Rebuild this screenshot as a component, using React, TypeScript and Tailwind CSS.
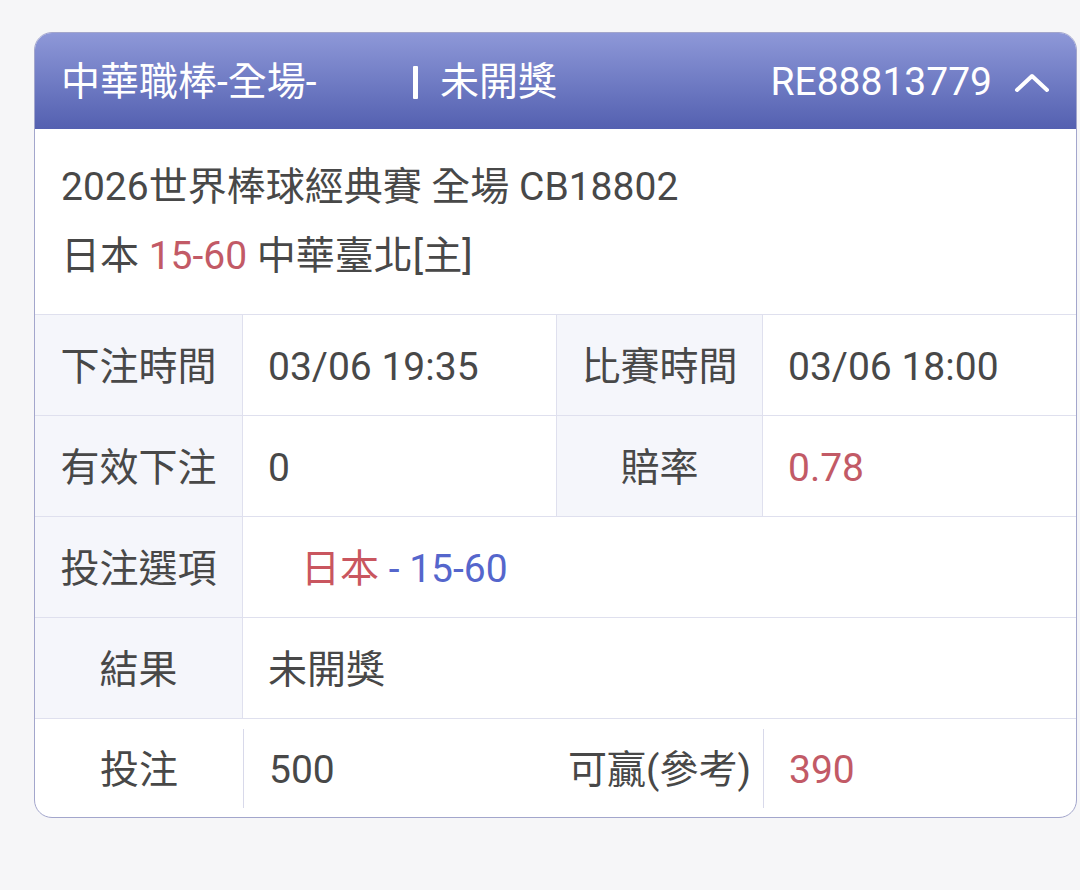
import React from "react";

const font = { fontFamily: 'Roboto, "Noto Sans CJK TC", sans-serif' };

function Label({ children }: { children: React.ReactNode }) {
  return (
    <div className="flex items-center justify-center pt-[5px] bg-[#f5f6fb] border-r border-[#dfe0ee] text-[39px] text-[#484848]">
      {children}
    </div>
  );
}

function Value({ children, className = "" }: { children: React.ReactNode; className?: string }) {
  return (
    <div className={`flex items-center pt-[5px] pl-[25px] text-[39px] text-[#484848] ${className}`}>
      {children}
    </div>
  );
}

export default function App() {
  return (
    <div className="min-h-[890px] w-[1080px] bg-[#f6f6f8] pt-[32px]" style={font}>
      <div className="ml-[34px] w-[1043px] rounded-[18px] border border-[#a3a6cc] bg-white overflow-hidden">
        {/* Header */}
        <div className="h-[96px] flex items-center pt-[3px] bg-gradient-to-b from-[#8e98d8] to-[#5460b0] text-white text-[39px] pl-[26px] pr-[26px]">
          <span className="w-[352px]">中華職棒-全場-</span>
          <span className="w-[5px] h-[33px] bg-white rounded-[1px]" />
          <span className="ml-[22px]">未開獎</span>
          <span className="ml-auto">RE88813779</span>
          <svg className="ml-[22px]" width="36" height="20" viewBox="0 0 36 20" fill="none">
            <path d="M3 17 L18 3 L33 17" stroke="white" strokeWidth="4" strokeLinecap="round" strokeLinejoin="round" />
          </svg>
        </div>
        {/* Info */}
        <div className="px-[26px] pt-[24px] pb-[23px] text-[39px] leading-[69px] text-[#484848]">
          <div>2026世界棒球經典賽 全場 CB18802</div>
          <div>
            日本 <span className="text-[#c25a66]">15-60</span> 中華臺北[主]
          </div>
        </div>
        {/* Table */}
        <div className="grid grid-cols-[208px_314px_206px_1fr] border-t border-[#dfe0ee]">
          <Label>下注時間</Label>
          <Value className="h-[100px] border-r border-[#dfe0ee]">03/06 19:35</Value>
          <Label>比賽時間</Label>
          <Value className="h-[100px]">03/06 18:00</Value>
          <div className="col-span-4 h-[1px] bg-[#dfe0ee]" />
          <Label>有效下注</Label>
          <Value className="h-[100px] border-r border-[#dfe0ee]">0</Value>
          <Label>賠率</Label>
          <Value className="h-[100px] text-[#c25a66]">0.78</Value>
          <div className="col-span-4 h-[1px] bg-[#dfe0ee]" />
          <Label>投注選項</Label>
          <div className="col-span-3 h-[100px] flex items-center pt-[5px] pl-[58px] text-[39px]">
            <span className="text-[#c9565f]">日本</span>
            <span className="text-[#5566cc]">&nbsp;- 15-60</span>
          </div>
          <div className="col-span-4 h-[1px] bg-[#dfe0ee]" />
          <Label>結果</Label>
          <Value className="col-span-3 h-[100px]">未開獎</Value>
          <div className="col-span-4 h-[1px] bg-[#dfe0ee]" />
          <div className="h-[98px] flex items-center justify-center pt-[5px] text-[39px] text-[#484848]">投注</div>
          <div className="h-[98px] flex items-center">
            <div className="h-[79px] border-l border-[#d8d9ea]" />
            <span className="pl-[25px] pt-[5px] text-[39px] text-[#484848]">500</span>
          </div>
          <div className="h-[98px] flex items-center justify-end pt-[5px] pr-[12px] text-[39px] text-[#484848]">可贏(參考)</div>
          <div className="h-[98px] flex items-center">
            <div className="h-[79px] border-l border-[#d8d9ea]" />
            <span className="pl-[25px] pt-[5px] text-[39px] text-[#c25a66]">390</span>
          </div>
        </div>
      </div>
    </div>
  );
}
